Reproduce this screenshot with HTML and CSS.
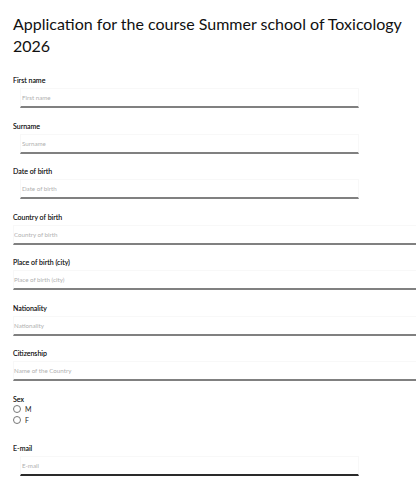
FILE: index.html
```html
<!DOCTYPE html>
<html lang="en">
<head>
<meta charset="utf-8">
<title>Application form</title>
<link rel="stylesheet" href="styles.css">
</head>
<body>
<main class="page">
  <h1 class="title">Application for the course Summer school of Toxicology 2026</h1>
  <form class="form">
    <div class="field">
      <label class="label" for="fname">First name</label>
      <input class="input input-inset" id="fname" type="text" placeholder="First name">
    </div>
    <div class="field">
      <label class="label" for="sname">Surname</label>
      <input class="input input-inset" id="sname" type="text" placeholder="Surname">
    </div>
    <div class="field">
      <label class="label" for="dob">Date of birth</label>
      <input class="input input-inset" id="dob" type="text" placeholder="Date of birth">
    </div>
    <div class="field">
      <label class="label" for="country">Country of birth</label>
      <input class="input input-wide" id="country" type="text" placeholder="Country of birth">
    </div>
    <div class="field">
      <label class="label" for="city">Place of birth (city)</label>
      <input class="input input-wide" id="city" type="text" placeholder="Place of birth (city)">
    </div>
    <div class="field">
      <label class="label" for="nat">Nationality</label>
      <input class="input input-wide" id="nat" type="text" placeholder="Nationality">
    </div>
    <div class="field">
      <label class="label" for="cit">Citizenship</label>
      <input class="input input-wide" id="cit" type="text" placeholder="Name of the Country">
    </div>
    <div class="field field-radio">
      <span class="label">Sex</span>
      <label class="radio"><input type="radio" name="sex" value="M"><span>M</span></label>
      <label class="radio"><input type="radio" name="sex" value="F"><span>F</span></label>
    </div>
    <div class="field">
      <label class="label" for="mail">E-mail</label>
      <input class="input input-inset input-dark" id="mail" type="email" placeholder="E-mail">
    </div>
  </form>
</main>
</body>
</html>
```

FILE: styles.css
```css
html, body {
  margin: 0;
  padding: 0;
  background: #ffffff;
  overflow: hidden;
}

.page {
  padding: 13px 0 0 13px;
  font-family: Lato, "Open Sans", sans-serif;
  color: #111;
}

.title {
  margin: 0 0 18px 0;
  font-size: 16px;
  font-weight: 400;
  line-height: 22px;
  color: #111;
}

.form {
  display: flex;
  flex-direction: column;
}

.field {
  display: flex;
  flex-direction: column;
  height: 45.5px;
}

.label {
  font-size: 7px;
  line-height: 10px;
  font-weight: 400;
  color: #000;
  -webkit-text-stroke: 0.1px #000;
}

.input {
  box-sizing: border-box;
  margin-top: 3px;
  height: 20px;
  border: 1px solid #f8f8f8;
  border-bottom: 2px solid #808080;
  background: #fff;
  font-family: inherit;
  font-size: 6.2px;
  padding: 0 1px;
  outline: none;
}

.input::placeholder {
  color: #b0b0b0;
}

.input-inset {
  margin-left: 7px;
  width: 339px;
}

.input-wide {
  width: 420px;
  padding-left: 0;
}

.input-dark {
  border-bottom-color: #2a2a2a;
}

.field-radio {
  height: auto;
  margin-bottom: 17px;
}

.radio {
  display: flex;
  align-items: center;
  gap: 4px;
  height: 11px;
  font-size: 7px;
  color: #222;
}

.radio input {
  appearance: none;
  -webkit-appearance: none;
  margin: 0;
  width: 8px;
  height: 8px;
  border: 1px solid #777;
  border-radius: 50%;
  background: #fff;
}
```
